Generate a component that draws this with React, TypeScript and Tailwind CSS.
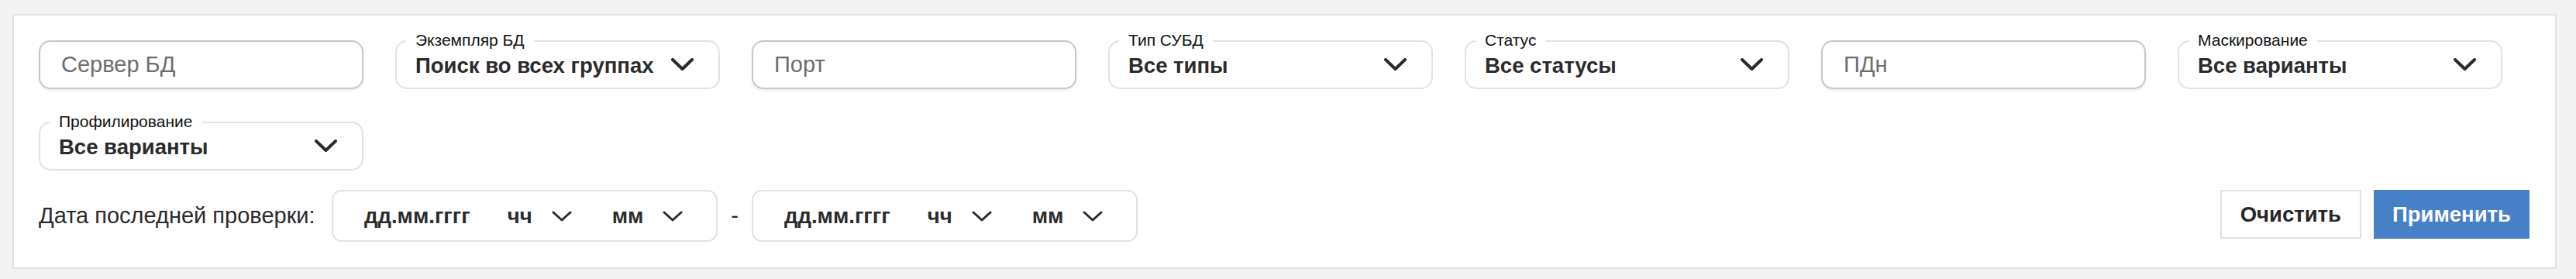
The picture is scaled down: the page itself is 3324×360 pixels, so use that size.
import React from 'react';

const Chevron = ({ small = false }: { small?: boolean }) =>
  small ? (
    <svg width="26" height="14" viewBox="0 0 26 14" fill="none" className="shrink-0">
      <polyline points="2,2 13,12 24,2" stroke="#2b2b2b" strokeWidth="3" strokeLinecap="round" strokeLinejoin="round" />
    </svg>
  ) : (
    <svg width="29" height="17" viewBox="0 0 29 17" fill="none" className="shrink-0">
      <polyline points="2,2 14.5,14 27,2" stroke="#2b2b2b" strokeWidth="4" strokeLinecap="round" strokeLinejoin="round" />
    </svg>
  );

const TextField = ({ placeholder }: { placeholder: string }) => (
  <div className="w-[419px] h-[63px] shrink-0 rounded-[15px] border-2 border-[#c8c8c8] bg-white shadow-[0_2px_3px_rgba(0,0,0,0.08)] flex items-center pl-[27px]">
    <span className="text-[29px] text-[#6e6e6e]">{placeholder}</span>
  </div>
);

const SelectField = ({ label, value }: { label: string; value: string }) => (
  <div className="relative w-[419px] h-[63px] shrink-0 rounded-[15px] border-2 border-[#e2e2e2] bg-white flex items-center justify-between pl-[24px] pr-[32px]">
    <span className="absolute left-[12px] top-[-17px] bg-white px-[12px] text-[21px] leading-[30px] text-[#111]">
      {label}
    </span>
    <span className="text-[27.5px] font-bold text-[#2b2b2b] pt-[2px]">{value}</span>
    <Chevron />
  </div>
);

const DateRange = () => (
  <div className="w-[498px] h-[67px] shrink-0 rounded-[13px] border-2 border-[#e2e2e2] bg-white flex items-center pl-[40px] text-[27.5px] font-bold text-[#2b2b2b]">
    <span>дд.мм.гггг</span>
    <span className="ml-[48px]">чч</span>
    <span className="ml-[25px]"><Chevron small /></span>
    <span className="ml-[52px]">мм</span>
    <span className="ml-[25px]"><Chevron small /></span>
  </div>
);

export default function App() {
  return (
    <div className="min-h-screen bg-[#f3f3f3] pt-[18px] pl-[16px] pr-[25px]" style={{ fontFamily: '"Liberation Sans", Arial, sans-serif' }}>
      <div className="border-2 border-[#e2e2e2] bg-white pl-[32px] pr-[33px] pt-[32px] pb-[33px]">
        <div className="flex flex-wrap gap-x-[41px] gap-y-[42px]">
          <TextField placeholder="Сервер БД" />
          <SelectField label="Экземпляр БД" value="Поиск во всех группах" />
          <TextField placeholder="Порт" />
          <SelectField label="Тип СУБД" value="Все типы" />
          <SelectField label="Статус" value="Все статусы" />
          <TextField placeholder="ПДн" />
          <SelectField label="Маскирование" value="Все варианты" />
          <SelectField label="Профилирование" value="Все варианты" />
        </div>
        <div className="mt-[25px] flex items-center">
          <span className="w-[378px] shrink-0 text-[29px] text-[#2b2b2b]">Дата последней проверки:</span>
          <DateRange />
          <span className="w-[44px] text-center text-[29px] text-[#2b2b2b]">-</span>
          <DateRange />
          <div className="flex-1" />
          <div className="flex items-center gap-[16px] -mt-[4px]">
            <button className="h-[63px] px-[24px] border-2 border-[#e2e2e2] bg-white text-[27.5px] font-bold text-[#262626]">
              Очистить
            </button>
            <button className="h-[63px] px-[24px] bg-[#4880c8] text-[27.5px] font-bold text-white">
              Применить
            </button>
          </div>
        </div>
      </div>
    </div>
  );
}
